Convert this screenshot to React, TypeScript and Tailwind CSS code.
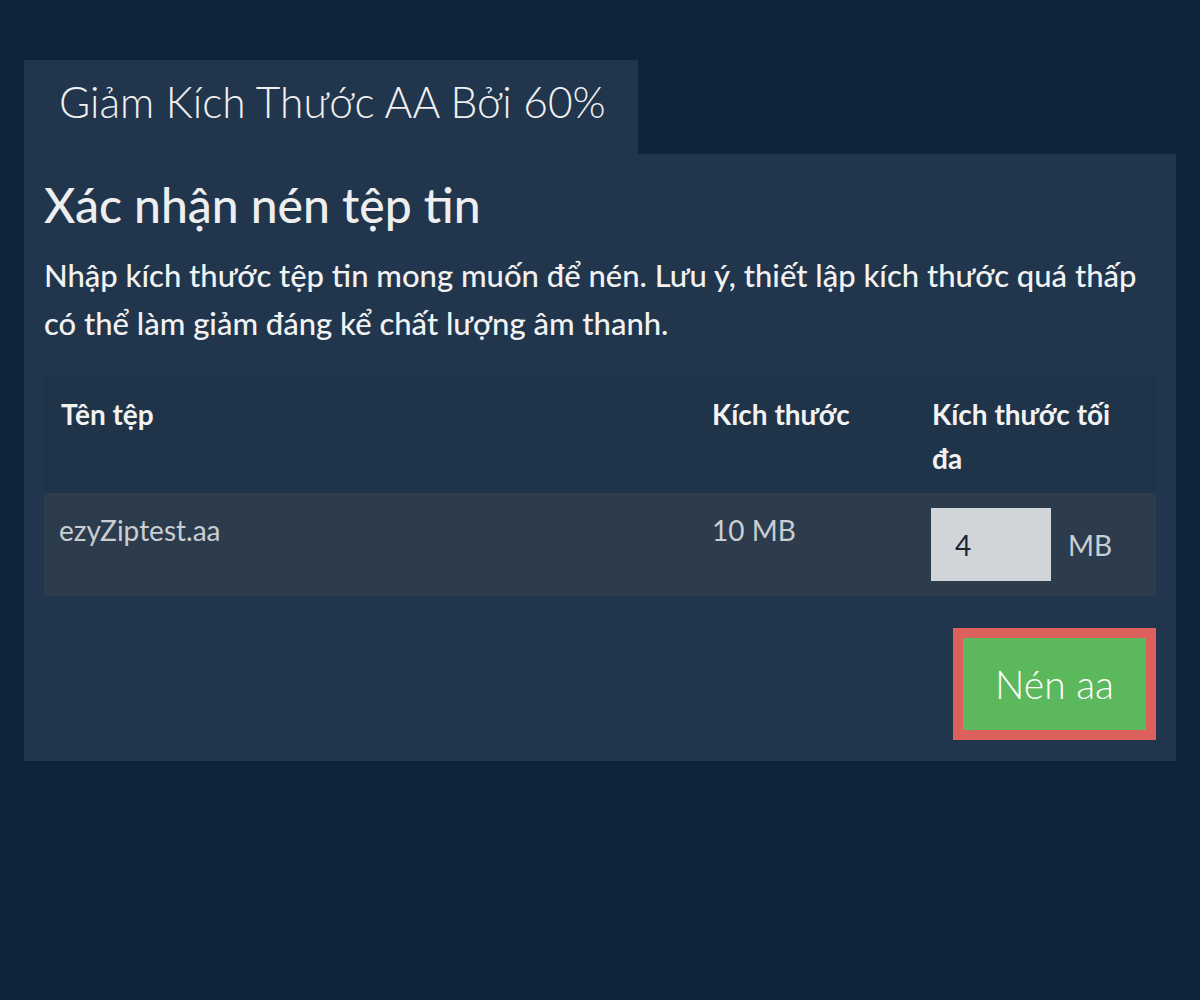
export default function App() {
  return (
    <div className="min-h-[1000px] w-full bg-[#0f2438] pt-[60px] px-[24px] font-['Lato','Noto_Sans',sans-serif]">
      <div className="flex">
        <div className="w-[614px] h-[94px] bg-[#21364d] pl-[35px] pb-[10px] flex items-center">
          <h1 className="text-[42.5px] font-light text-[#f0f0f0] leading-none">
            Giảm Kích Thước AA Bởi 60%
          </h1>
        </div>
      </div>
      <div className="bg-[#21364d] px-[20px] pt-[23px] pb-[21px]">
        <h2 className="text-[48px] font-medium text-[#eeeeee] leading-[56px]">
          Xác nhận nén tệp tin
        </h2>
        <p className="mt-[18px] text-[31px] font-medium text-[#f2f2f2] leading-[48px]">
          Nhập kích thước tệp tin mong muốn để nén. Lưu ý, thiết lập kích thước quá thấp có thể làm giảm đáng kể chất lượng âm thanh.
        </p>
        <table className="mt-[29px] w-full border-collapse text-[28px] leading-[44px] table-fixed">
          <thead>
            <tr className="bg-[#1f3449] text-left text-[#f2f2f2]">
              <th className="w-[651px] px-[17px] pt-[16px] pb-[13px] font-bold align-top">Tên tệp</th>
              <th className="w-[220px] px-[17px] pt-[16px] pb-[13px] font-bold align-top">Kích thước</th>
              <th className="px-[17px] pt-[16px] pb-[13px] font-bold align-top">Kích thước tối đa</th>
            </tr>
          </thead>
          <tbody>
            <tr className="bg-[#2c3c4d] text-[#c9ced3]">
              <td className="px-[15px] py-[15px] align-top">ezyZiptest.aa</td>
              <td className="px-[17px] py-[15px] align-top">10 MB</td>
              <td className="px-[16px] py-[15px] align-top">
                <div className="flex items-center gap-[17px]">
                  <input
                    defaultValue="4"
                    className="w-[120px] h-[73px] bg-[#d1d5d9] text-[#1c2633] text-[28px] pl-[24px] outline-none"
                  />
                  <span>MB</span>
                </div>
              </td>
            </tr>
          </tbody>
        </table>
        <div className="flex justify-end mt-[32px]">
          <button className="w-[203px] h-[112px] border-[10px] border-[#dc605c] bg-[#5cb85c] text-[39px] font-light text-white">
            Nén aa
          </button>
        </div>
      </div>
    </div>
  );
}
